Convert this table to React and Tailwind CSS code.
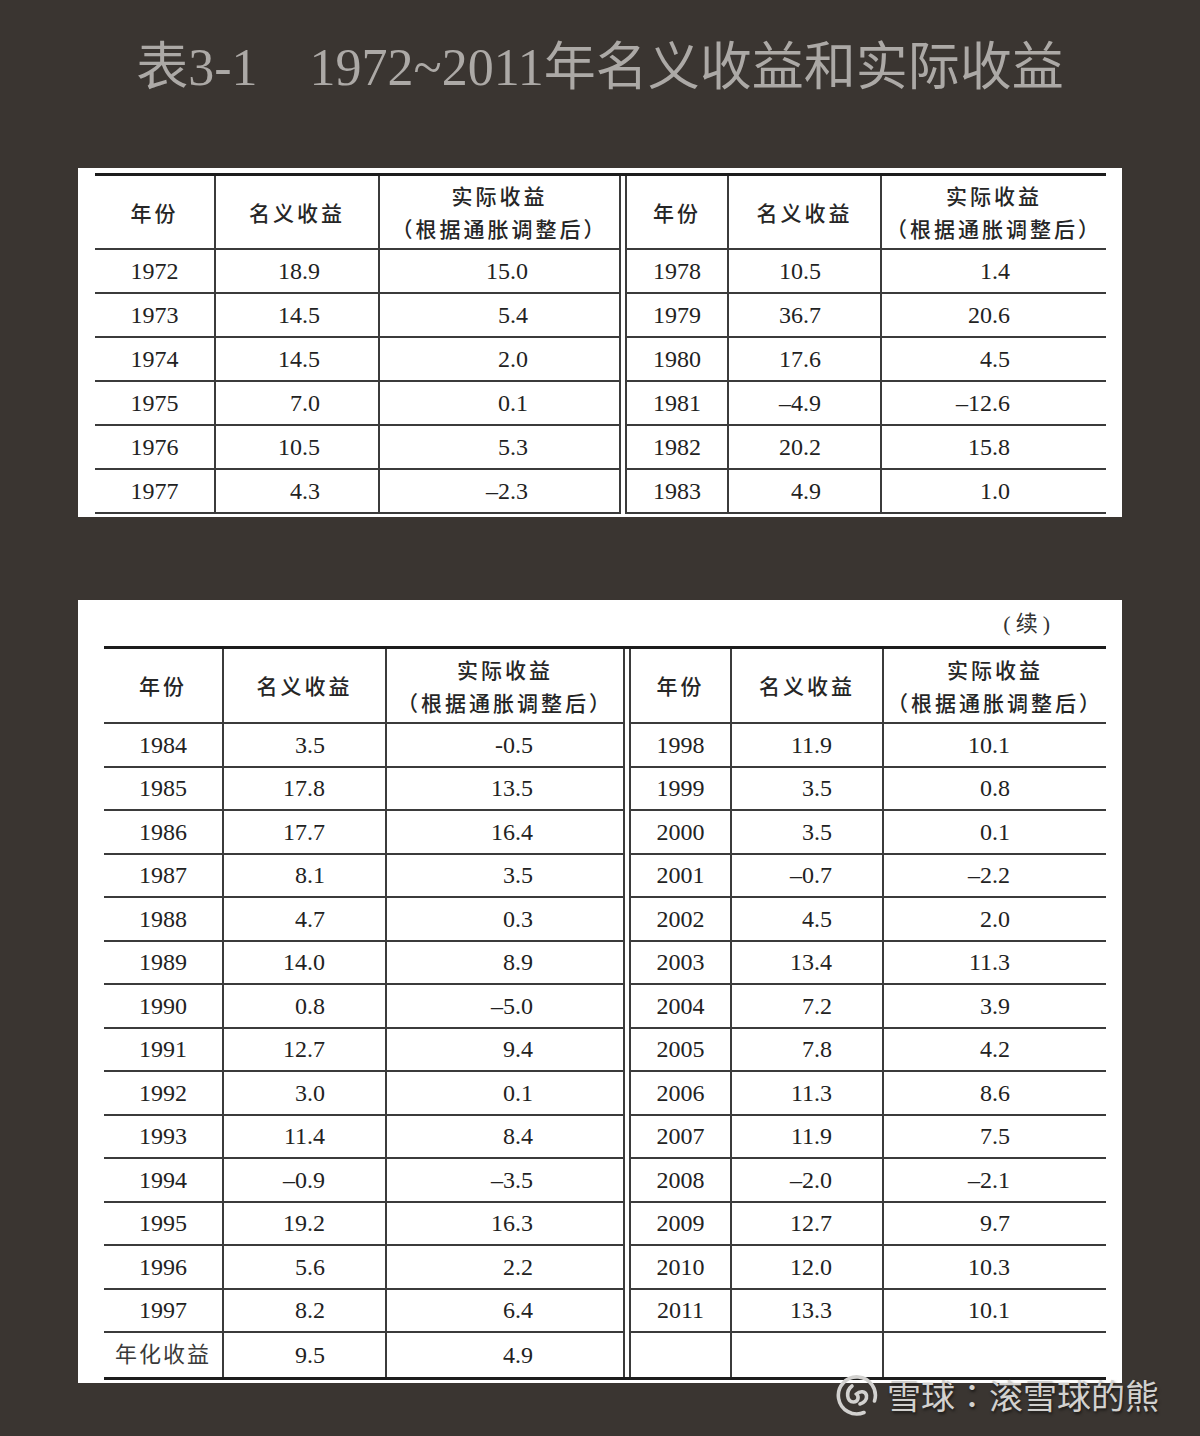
import React from 'react';

const SERIF = "font-['Liberation_Serif','Noto_Sans_CJK_SC',serif]";
const HEI = "font-['Noto_Sans_CJK_SC',sans-serif]";

const first = {
  widths: ['w-[121px]', 'w-[164px]', 'w-[241px]', 'w-[104px]', 'w-[153px]', 'w-[224px]'],
  pads: ['', 'pr-[58px]', 'pr-[91px]', '', 'pr-[59px]', 'pr-[96px]'],
  head: 'h-[74px]',
  row: 'h-[44px]',
  rows: [
    ['1972', '18.9', '15.0', '1978', '10.5', '1.4'],
    ['1973', '14.5', '5.4', '1979', '36.7', '20.6'],
    ['1974', '14.5', '2.0', '1980', '17.6', '4.5'],
    ['1975', '7.0', '0.1', '1981', '–4.9', '–12.6'],
    ['1976', '10.5', '5.3', '1982', '20.2', '15.8'],
    ['1977', '4.3', '–2.3', '1983', '4.9', '1.0'],
  ],
};

const second = {
  widths: ['w-[120px]', 'w-[163px]', 'w-[238px]', 'w-[103px]', 'w-[152px]', 'w-[222px]'],
  pads: ['', 'pr-[60px]', 'pr-[90px]', '', 'pr-[50px]', 'pr-[96px]'],
  head: 'h-[75px]',
  row: 'h-[43.5px]',
  rows: [
    ['1984', '3.5', '-0.5', '1998', '11.9', '10.1'],
    ['1985', '17.8', '13.5', '1999', '3.5', '0.8'],
    ['1986', '17.7', '16.4', '2000', '3.5', '0.1'],
    ['1987', '8.1', '3.5', '2001', '–0.7', '–2.2'],
    ['1988', '4.7', '0.3', '2002', '4.5', '2.0'],
    ['1989', '14.0', '8.9', '2003', '13.4', '11.3'],
    ['1990', '0.8', '–5.0', '2004', '7.2', '3.9'],
    ['1991', '12.7', '9.4', '2005', '7.8', '4.2'],
    ['1992', '3.0', '0.1', '2006', '11.3', '8.6'],
    ['1993', '11.4', '8.4', '2007', '11.9', '7.5'],
    ['1994', '–0.9', '–3.5', '2008', '–2.0', '–2.1'],
    ['1995', '19.2', '16.3', '2009', '12.7', '9.7'],
    ['1996', '5.6', '2.2', '2010', '12.0', '10.3'],
    ['1997', '8.2', '6.4', '2011', '13.3', '10.1'],
    ['年化收益', '9.5', '4.9', '', '', ''],
  ],
};

// vertical rules: the middle pair forms the double line
const sides = ['border-r-2', 'border-r-2', 'border-r-2', 'border-l-2 border-r-2', 'border-r-2', ''];

function HeadCells({ cfg }) {
  const labels = ['年份', '名义收益', null, '年份', '名义收益', null];
  const cells = labels.map((label, i) => (
    <div
      key={i}
      className={`${cfg.widths[i]} ${sides[i]} border-b-2 border-[#3b3b3b] flex flex-col items-center justify-center text-[21px] tracking-[3px] font-medium text-[#262626] ${HEI}`}
    >
      {label ? (
        <span className="leading-none">{label}</span>
      ) : (
        <>
          <span className="leading-[33px]">实际收益</span>
          <span className="leading-[33px]">（根据通胀调整后）</span>
        </>
      )}
    </div>
  ));
  return (
    <div className={`flex ${cfg.head}`}>
      {cells.slice(0, 3)}
      <div className="w-[4px]" />
      {cells.slice(3)}
    </div>
  );
}

function DataRow({ cfg, values, last, closed }) {
  const line = last && closed ? '' : 'border-b-2';
  const cells = values.map((v, i) => {
    const isYear = i === 0 || i === 3;
    const cjk = v === '年化收益';
    return (
      <div
        key={i}
        className={`${cfg.widths[i]} ${sides[i]} ${line} border-[#3b3b3b] flex items-center ${
          isYear ? 'justify-center' : `justify-end ${cfg.pads[i]}`
        } ${cjk ? 'text-[22px] tracking-[2px] text-[#3a3a3a]' : 'text-[24px] text-[#222]'} ${SERIF} leading-none`}
      >
        {v}
      </div>
    );
  });
  return (
    <div className={`flex ${cfg.row}`}>
      {cells.slice(0, 3)}
      <div className="w-[4px]" />
      {cells.slice(3)}
    </div>
  );
}

function Table({ cfg, closed }) {
  return (
    <div className={`border-t-[3px] border-[#1c1c1c] ${closed ? 'border-b-[3px]' : ''}`}>
      <HeadCells cfg={cfg} />
      {cfg.rows.map((r, i) => (
        <DataRow key={i} cfg={cfg} values={r} last={i === cfg.rows.length - 1} closed={closed} />
      ))}
    </div>
  );
}

function XueqiuLogo() {
  return (
    <svg width="42" height="42" viewBox="0 0 42 42" fill="none" stroke="#d2d1cf" strokeWidth="3.6" strokeLinecap="round">
      <path d="M28 38.5 A18.5 18.5 0 1 1 38.5 27" />
      <path d="M16 12 C9.5 17 10.5 28 17.5 28 C22 28 23.5 23 20.5 20 C24 16.5 29.5 17 30.5 21.5 C31.2 25.5 28 29 24 30" />
    </svg>
  );
}

export default function App() {
  return (
    <div className="relative w-[1200px] min-h-[1436px] bg-[#3a3531] pb-[54px]">
      <h1 className="h-[90px] pt-[37px] text-center text-[52px] leading-none font-normal text-[#aca9a6]">
        <span className={HEI}>表</span>
        <span className="font-['Liberation_Serif',serif]">3-1</span>
        <span className={HEI}>　</span>
        <span className="font-['Liberation_Serif',serif]">1972~2011</span>
        <span className={HEI}>年名义收益和实际收益</span>
      </h1>

      <div className="mt-[78px] ml-[78px] w-[1044px] bg-white pt-[5px] pb-[3px] pl-[17px] pr-[16px]">
        <Table cfg={first} closed={false} />
      </div>

      <div className="mt-[83px] ml-[78px] w-[1044px] bg-white pb-[3px] pl-[26px] pr-[16px]">
        <div className={`h-[46px] flex items-center justify-end pr-[56px] text-[22px] text-[#333] ${SERIF}`}>
          <span>(</span>
          <span className="mx-[5px]">续</span>
          <span>)</span>
        </div>
        <Table cfg={second} closed={true} />
      </div>

      {/* watermark over the bottom edge */}
      <div className="absolute left-[836px] top-[1374px] flex items-center gap-[9px]">
        <XueqiuLogo />
        <span
          className={`text-[34px] leading-none text-[#d2d1cf] ${HEI} [text-shadow:1px_2px_3px_rgba(0,0,0,0.55)]`}
        >
          雪球<span className="font-['Noto_Sans_CJK_TC',sans-serif]">：</span>滚雪球的熊
        </span>
      </div>
    </div>
  );
}
